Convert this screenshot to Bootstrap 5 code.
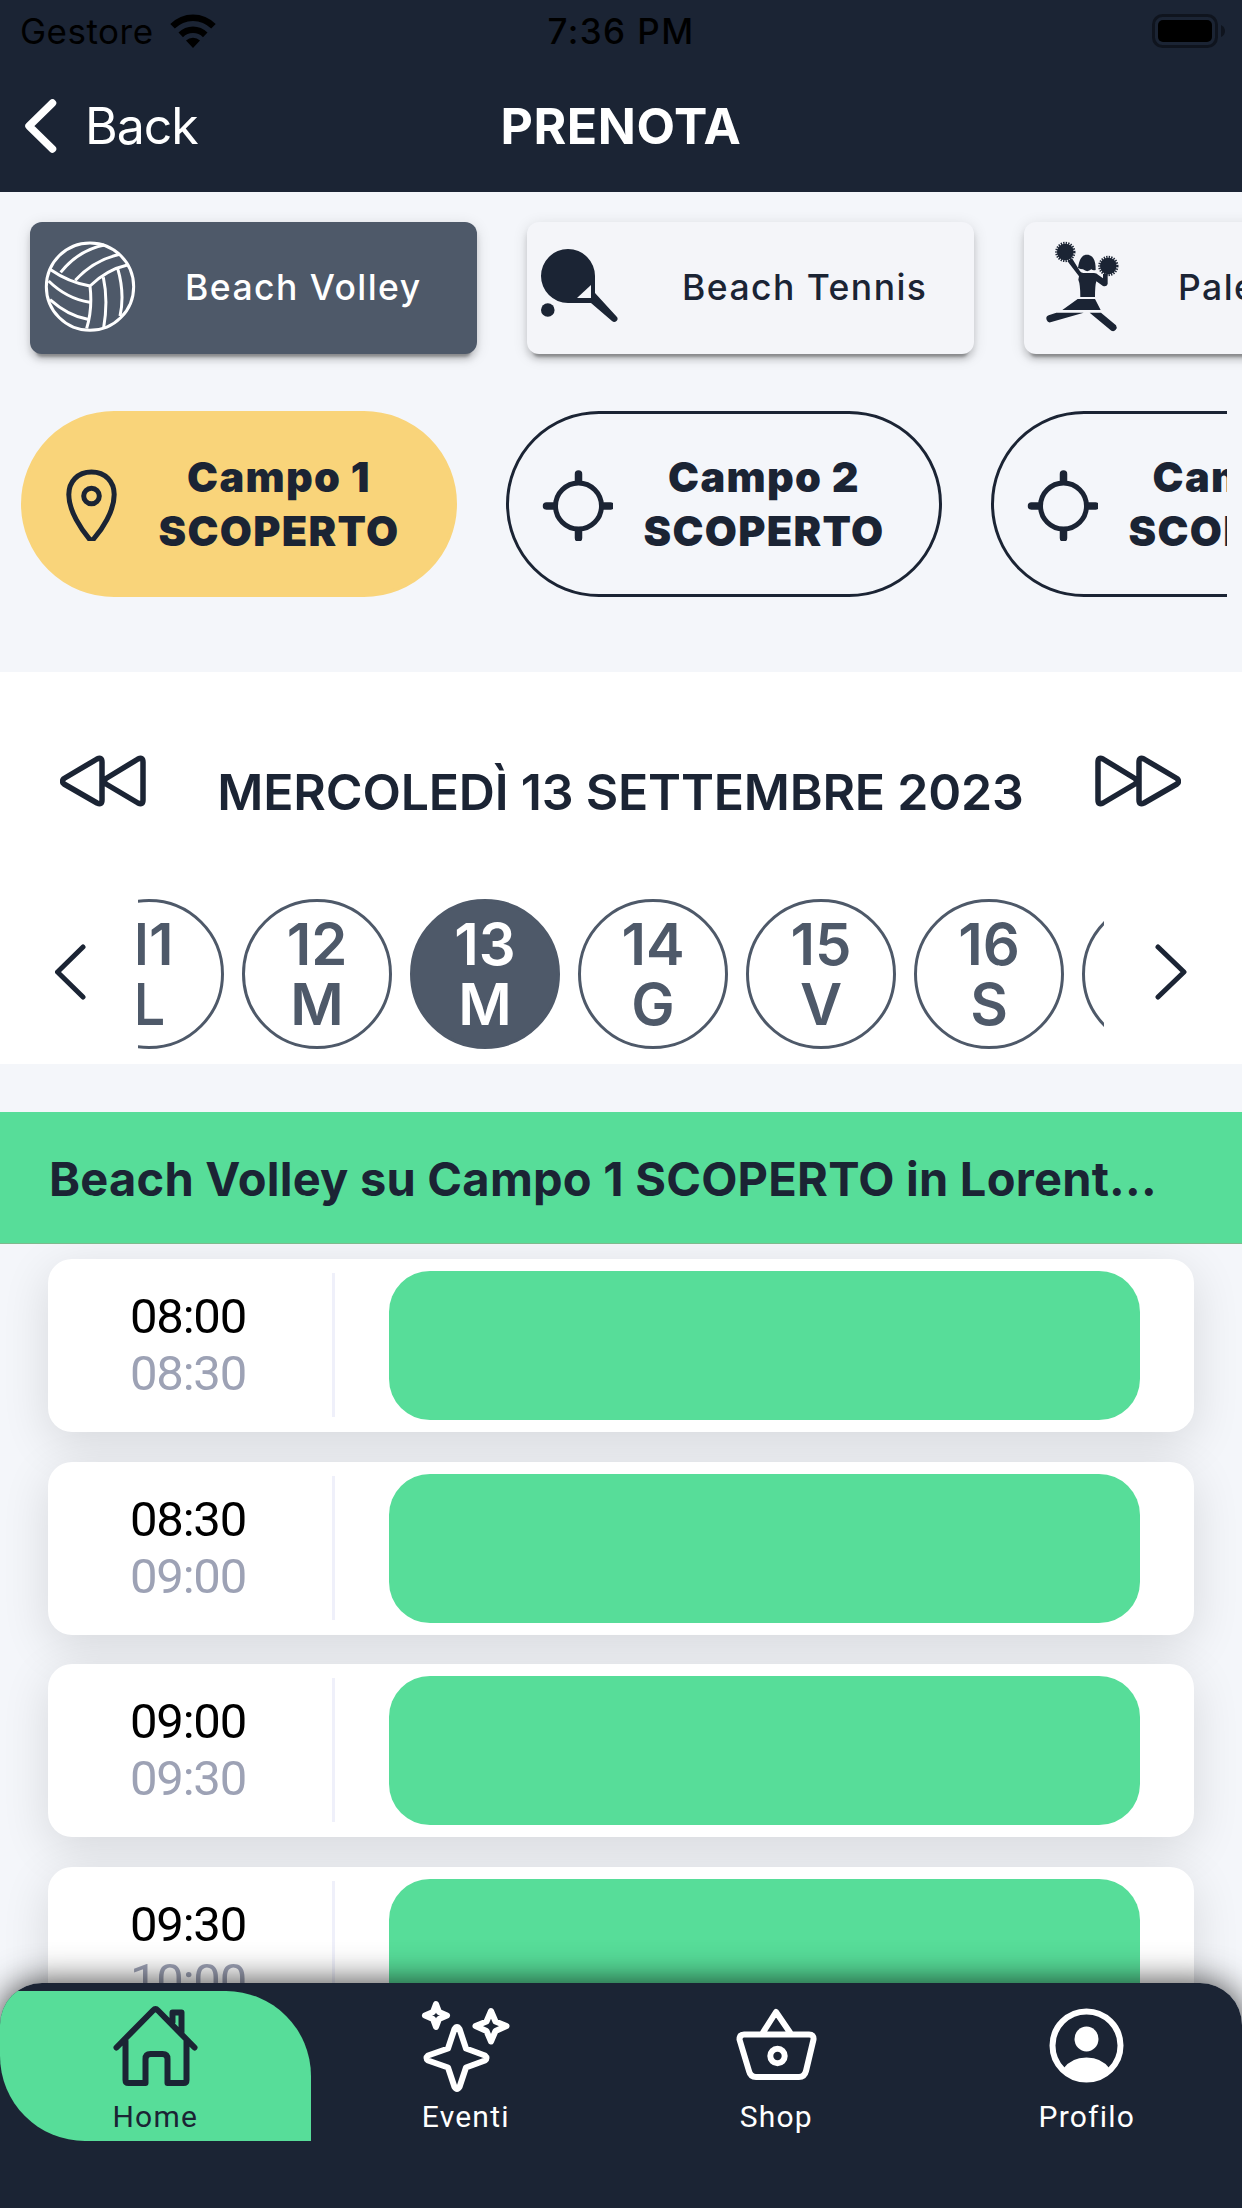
<!DOCTYPE html>
<html lang="it">
<head>
<meta charset="utf-8">
<meta name="viewport" content="width=device-width, initial-scale=1">
<title>Prenota</title>
<link href="https://cdn.jsdelivr.net/npm/bootstrap@5.3.0/dist/css/bootstrap.min.css" rel="stylesheet">
<style>
:root{--navy:#1b2434;--slate:#4e5969;--green:#57dd99;--yellow:#f9d47a;--page:#f4f6fa}
html,body{height:2208px;overflow:hidden}
body{font-family:Inter,"Liberation Sans",sans-serif;background:var(--page);color:var(--navy);width:1242px}
svg{display:block;flex:none}
.phone{height:2208px}
.topbar{height:192px;background:var(--navy)}
.status{height:62px;color:#000;font-size:35px;line-height:62px;padding:0 16px 0 20px}
.status>div{flex:1 1 0}
.status .carrier{letter-spacing:.5px}
.status .clock{font-weight:500;letter-spacing:1.4px;padding-right:4px}
.titlebar{height:128px;color:#fff;padding:0 25px;font-size:50px;line-height:60px}
.titlebar>div{flex:1 1 0}
.back-label{margin-left:28px;letter-spacing:-1px}
.heading{font-weight:700;letter-spacing:.6px}
.sports{height:192px;padding:30px 0 0 30px;gap:50px}
.sport{flex:none;width:447px;height:132px;border-radius:12px;padding-left:5px;background:#f4f5f9;font-weight:500;font-size:35.5px;letter-spacing:1.45px;box-shadow:0 9px 3px -6px rgba(0,0,0,.3),0 6px 6px rgba(0,0,0,.14),0 3px 15px rgba(0,0,0,.12)}
.sport.on{background:var(--slate);color:#fff}
.sport span{margin-left:40px}
.lifted{margin-top:-2px}
.nudged{margin-left:6px;margin-right:-7px}
.courts{height:288px;padding-top:27px;margin:0 15px 0 21px;gap:49px}
.court{flex:none;width:436px;height:186px;border-radius:93px;border:3px solid var(--navy);padding-left:33px;font-weight:900;font-size:41.5px;line-height:54px;letter-spacing:1.3px}
.court.on{background:var(--yellow);border-color:var(--yellow)}
.court .name{width:244px;margin-left:29px;white-space:nowrap}
.calendar{height:392px;background:#fff}
.dateline{height:218px;padding:0 61px 0 60px}
.dateline .day-title{font-size:50px;font-weight:600;line-height:60px;padding-top:22px;letter-spacing:-.2px}
.strip{height:174px;padding:0 55px}
.strip>svg{margin-top:54px}
.days{width:966px;height:150px;gap:18px;margin-top:9px}
.day{flex:none;width:150px;height:150px;border:3px solid var(--slate);border-radius:50%;color:var(--slate);font-size:58px;font-weight:600;line-height:60px;padding-top:12px;text-align:center}
.day:first-child{margin-left:-64px}
.day.on{background:var(--slate);color:#fff}
.banner{height:132px;margin-top:48px;background:var(--green);padding:0 49px;font-size:47px;font-weight:700;line-height:134px;letter-spacing:.23px;z-index:2;border-bottom:1px solid #7fb98d}
.slots{padding:15px 48px 0;gap:29.67px}
.slot{flex:none;height:173px;border-radius:24px;background:#fff;box-shadow:0 12px 48px rgba(0,0,0,.12);padding:12px 54px 12px 0}
.slot .hours{width:284px;height:144px;margin-top:2px;font-family:Roboto,sans-serif;font-size:49px;line-height:57px;letter-spacing:-1.2px;color:#000;padding:15px 0 0 82px}
.slot .hours small{display:block;font-size:49px;color:#9da2b5}
.slot .rule{width:3px;height:144px;background:#eff0fa;margin-top:2px}
.slot .free{width:751px;height:149px;border-radius:41px;background:var(--green)}
.tabbar{left:0;top:1983px;width:1242px;height:225px;border-radius:42px 42px 0 0;background:var(--navy);z-index:3;padding-top:8px;color:#fff;font-family:Roboto,sans-serif;font-size:30px;letter-spacing:1.2px;overflow:hidden}
.tabshade{left:0;top:1983px;width:1242px;height:300px;border-radius:42px 42px 0 0;box-shadow:0 0 34px rgba(0,0,0,.78);z-index:3}
.tab{width:310.5px;height:150px;padding-top:7px;line-height:36px}
.tab span{margin-top:5px}
.tab.on{background:var(--green);color:var(--navy);border-radius:0 85px 0 85px}
</style>
</head>
<body>
<div class="phone position-relative overflow-hidden d-flex flex-column">
  <header class="topbar flex-shrink-0">
    <div class="status d-flex align-items-center">
      <div class="d-flex align-items-center gap-3">
        <span class="carrier">Gestore</span>
        <svg width="46" height="34" viewBox="0 0 46 34"><path d="M23 34l-7-7.500a10 10 0 0 1 14 0z M8.500 18.500a20.500 20.500 0 0 1 29 0l-4.500 4.800a14 14 0 0 0-20 0z M.3 10a32 32 0 0 1 45.400 0l-4.500 4.600a25.500 25.500 0 0 0-36.400 0z"/></svg>
      </div>
      <div class="clock text-center">7:36 PM</div>
      <div class="d-flex justify-content-end">
        <svg width="74" height="34" viewBox="0 0 74 34"><rect x="1.500" y="1.500" width="63" height="31" rx="9" fill="none" stroke="#0f141e" stroke-width="3"/><rect x="6" y="6" width="54" height="22" rx="5"/><path d="M69 11q4 2 4 6t-4 6z" fill="#0f141e"/></svg>
      </div>
    </div>
    <div class="titlebar d-flex align-items-center">
      <div class="d-flex align-items-center">
        <svg width="32" height="54" viewBox="0 0 32 54" fill="none" stroke="#fff" stroke-width="7.500" stroke-linecap="round" stroke-linejoin="round"><path d="M27.500 4L4 27l23.500 23"/></svg>
        <span class="back-label">Back</span>
      </div>
      <div class="heading text-center">PRENOTA</div>
      <div></div>
    </div>
  </header>

  <div class="sports d-flex flex-shrink-0 overflow-hidden">
    <div class="sport on d-flex align-items-center">
      <svg class="lifted" width="110" height="110" viewBox="0 0 330 330" fill="none" stroke="#fff" stroke-width="9"><circle cx="165" cy="164" r="131"/><path d="M47 113Q100 150 165 162Q215 113 277 99M77 121Q130 55 208 39M121 145Q175 85 254 67M165 162Q173 230 155 289M41 147Q95 200 164 211M45 203Q100 252 158 262M205 136Q220 205 206 287M248 109Q270 185 255 252"/></svg>
      <span>Beach Volley</span>
    </div>
    <div class="sport d-flex align-items-center">
      <svg width="110" height="110" viewBox="0 0 110 110" fill="#1b2434"><path d="M9 43a27 27 0 0 1 54 0v17l21.500 23.500a3 3 0 0 1-4.500 4.500L59 70H36A27 27 0 0 1 9 43z"/><path d="M45 65l14-13v13z" fill="#f4f5f9"/><circle cx="15.800" cy="77" r="6.800"/></svg>
      <span>Beach Tennis</span>
    </div>
    <div class="sport d-flex align-items-center">
      <svg class="lifted nudged" width="110" height="110" viewBox="0 0 330 330" fill="#1b2434"><circle cx="91" cy="60" r="25"/><circle cx="91" cy="60" r="27" fill="none" stroke="#1b2434" stroke-width="7" stroke-dasharray="4 3.500"/><circle cx="220" cy="102" r="25"/><circle cx="220" cy="102" r="27" fill="none" stroke="#1b2434" stroke-width="7" stroke-dasharray="4 3.500"/><path d="M129 108C133 82 140 68 156 68s27 14 26 46q-8 2-13-2q-12 11-25 0q-7 0-15-4z"/><path d="M97 87l14-8 24 39q4 5 10 5h32q8 0 13 6l14 10v-13h14v30q-3 9-14 6l-20-14q-4 12-4 47h-44q0-38-6-52l2-10zM128 201h52l17 33H82zM64 242h82L49 270a10 10 0 0 1-8-20zM164 242h34l45 38a11 11 0 0 1-14 16z"/></svg>
      <span>Palestra</span>
    </div>
  </div>

  <div class="courts d-flex flex-shrink-0 overflow-hidden">
    <div class="court on d-flex align-items-center">
      <svg width="71" height="73" viewBox="0 0 71 73" fill="none" stroke="#1b2434" stroke-width="5" stroke-linejoin="round"><path d="M35 4C21 4 12.300 14 12.300 27c0 17 13 36 20.500 45q2.200 2 4.400 0c8-9 20.500-28 20.500-45C57.700 14 49 4 35 4z" transform="translate(-.5 0) scale(1 .985)"/><circle cx="34.500" cy="28" r="7.800"/></svg>
      <div class="name text-center">Campo 1<br>SCOPERTO</div>
    </div>
    <div class="court d-flex align-items-center">
      <svg width="71" height="73" viewBox="0 0 71 73" fill="none" stroke="#1b2434" stroke-width="5"><circle cx="36.500" cy="38" r="23"/><path d="M36.500 6v7M36.500 63v7M4.500 38h7M61.500 38h7" stroke-width="7.500" stroke-linecap="round"/></svg>
      <div class="name text-center">Campo 2<br>SCOPERTO</div>
    </div>
    <div class="court d-flex align-items-center">
      <svg width="71" height="73" viewBox="0 0 71 73" fill="none" stroke="#1b2434" stroke-width="5"><circle cx="36.500" cy="38" r="23"/><path d="M36.500 6v7M36.500 63v7M4.500 38h7M61.500 38h7" stroke-width="7.500" stroke-linecap="round"/></svg>
      <div class="name text-center">Campo 3<br>SCOPERTO</div>
    </div>
  </div>

  <section class="calendar flex-shrink-0">
    <div class="dateline d-flex justify-content-between align-items-center">
      <svg width="86" height="52" viewBox="0 0 86 52" fill="none" stroke="#1b2434" stroke-width="5.500" stroke-linejoin="round"><path d="M4 23.500L37 4q5-2.500 5 3v38q0 5.500-5 3L4 29q-3-2.500 0-5.500zM46 23.500L78 4q5-2.500 5 3v38q0 5.500-5 3L46 29q-3-2.500 0-5.500z"/></svg>
      <div class="day-title">MERCOLEDÌ 13 SETTEMBRE 2023</div>
      <svg width="86" height="52" viewBox="0 0 86 52" fill="none" stroke="#1b2434" stroke-width="5.500" stroke-linejoin="round"><path transform="matrix(-1 0 0 1 86 0)" d="M4 23.500L37 4q5-2.500 5 3v38q0 5.500-5 3L4 29q-3-2.500 0-5.500zM46 23.500L78 4q5-2.500 5 3v38q0 5.500-5 3L46 29q-3-2.500 0-5.500z"/></svg>
    </div>
    <div class="strip d-flex justify-content-between">
      <svg width="32" height="56" viewBox="0 0 32 56" fill="none" stroke="#1b2434" stroke-width="5" stroke-linecap="round" stroke-linejoin="round"><path d="M28 3L2.500 28 28 53"/></svg>
      <div class="days d-flex overflow-hidden">
        <div class="day">11<br>L</div>
        <div class="day">12<br>M</div>
        <div class="day on">13<br>M</div>
        <div class="day">14<br>G</div>
        <div class="day">15<br>V</div>
        <div class="day">16<br>S</div>
        <div class="day">17<br>D</div>
      </div>
      <svg width="32" height="56" viewBox="0 0 32 56" fill="none" stroke="#1b2434" stroke-width="5" stroke-linecap="round" stroke-linejoin="round"><path d="M3 3l26 25L3 53"/></svg>
    </div>
  </section>

  <div class="banner flex-shrink-0 position-relative text-nowrap">Beach Volley su Campo 1 SCOPERTO in Lorent...</div>

  <main class="slots d-flex flex-column">
    <div class="slot d-flex"><div class="hours">08:00<small>08:30</small></div><div class="rule"></div><div class="free ms-auto"></div></div>
    <div class="slot d-flex"><div class="hours">08:30<small>09:00</small></div><div class="rule"></div><div class="free ms-auto"></div></div>
    <div class="slot d-flex"><div class="hours">09:00<small>09:30</small></div><div class="rule"></div><div class="free ms-auto"></div></div>
    <div class="slot d-flex"><div class="hours">09:30<small>10:00</small></div><div class="rule"></div><div class="free ms-auto"></div></div>
  </main>

  <div class="tabshade position-absolute"></div>
  <nav class="tabbar position-absolute d-flex">
    <div class="tab on d-flex flex-column align-items-center">
      <svg width="96" height="96" viewBox="0 0 96 96" fill="none" stroke="#1b2434" stroke-width="6" stroke-linecap="round" stroke-linejoin="round"><path d="M9.500 49.500L46 12.500q2.500-2.500 5 0l36.500 37M18.500 43v39q0 3 3 3h17V61q0-5 5-5h12q5 0 5 5v24h16q3 0 3-3V43M65.500 24V14.500h9V34"/></svg>
      <span>Home</span>
    </div>
    <div class="tab d-flex flex-column align-items-center">
      <svg width="96" height="96" viewBox="0 0 96 96" fill="none" stroke="#fff" stroke-width="6" stroke-linecap="round" stroke-linejoin="round"><path d="M36.500 31q2.500-4 5 0l6.500 19.500 19 7q3 2.500 0 5L48 69.500 41.500 89q-2.500 4-5 0L30 69.500l-20-7q-3-2.500 0-5l20-7zM18 6l3 8 8 3.500-8 3.500-3 8-3-8-8-3.500 8-3.500zM73 13l4.500 10.500 11 4.500-11 5L73 43.500l-4.500-10.500-11-5 11-4.500z"/></svg>
      <span>Eventi</span>
    </div>
    <div class="tab d-flex flex-column align-items-center">
      <svg width="96" height="96" viewBox="0 0 96 96" fill="none" stroke="#fff" stroke-width="6" stroke-linejoin="round"><path d="M34 36l14-22 15 22M16 36.500h65q5 0 4.500 5L78 73q-1.500 6-7 6H28q-5.500 0-7-6L11.500 41.500q0-5 4.500-5z"/><circle cx="49.500" cy="58" r="7.200"/></svg>
      <span>Shop</span>
    </div>
    <div class="tab d-flex flex-column align-items-center">
      <svg width="96" height="96" viewBox="0 0 96 96"><circle cx="47.500" cy="47.500" r="34" fill="none" stroke="#fff" stroke-width="6"/><ellipse cx="47.500" cy="41" rx="12" ry="12.500" fill="#fff"/><path d="M24 71Q32 59.500 47.500 59.500T71 71Q61 83 47.500 83T24 71z" fill="#fff"/></svg>
      <span>Profilo</span>
    </div>
  </nav>
</div>
<script src="https://cdn.jsdelivr.net/npm/bootstrap@5.3.0/dist/js/bootstrap.bundle.min.js"></script>
</body>
</html>
